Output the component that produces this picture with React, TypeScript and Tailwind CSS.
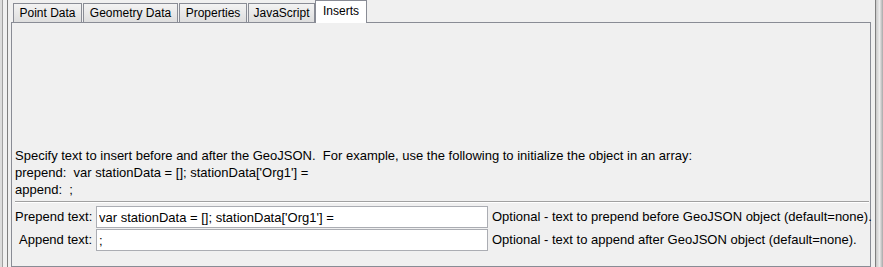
import React from "react";

const tabs = [
  { label: "Point Data", w: "w-[69px]", ml: "" },
  { label: "Geometry Data", w: "w-[95px]", ml: "ml-[1px]" },
  { label: "Properties", w: "w-[68px]", ml: "ml-[1px]" },
  { label: "JavaScript", w: "w-[67px]", ml: "ml-[1px]" },
];

export default function App() {
  return (
    <div className="w-[883px] h-[267px] overflow-hidden flex bg-[#f0f0f0] text-black font-[Liberation_Sans,Arial,sans-serif] text-[13px]">
      {/* left window edge */}
      <div className="w-[8px] h-full flex shrink-0">
        <div className="w-[2px] h-full bg-[#dcdcdc]" />
        <div className="w-[1px] h-full bg-[#a0a0a0]" />
        <div className="w-[4px] h-full bg-[#f0f0f0]" />
        <div className="w-[1px] h-full bg-[#7f7f7f]" />
      </div>

      {/* main area */}
      <div className="w-[867px] h-full flex flex-col pl-[3px] pr-[4px] shrink-0">
        {/* tab strip */}
        <div className="h-[22px] flex items-end pl-[2px] shrink-0 text-[12px]">
          {tabs.map((t) => (
            <div
              key={t.label}
              className={`${t.w} ${t.ml} h-[19px] border border-b-0 border-[#898c95] bg-gradient-to-b from-[#f3f3f3] to-[#dedede] text-center leading-[18px] whitespace-nowrap`}
            >
              {t.label}
            </div>
          ))}
          <div className="w-[52px] h-[23px] -mb-px relative z-10 border border-b-0 border-[#898c95] bg-white text-center leading-[18px] pt-[1px] whitespace-nowrap">
            Inserts
          </div>
        </div>

        {/* panel */}
        <div className="flex-1 border border-[#898c95] bg-[#f0f0f0] flex flex-col pl-[3px] pr-[1px] pt-[124px]">
          <div className="leading-[17px] whitespace-nowrap">
            <div>
              Specify text to insert before and after the GeoJSON.&nbsp; For example, use the following to initialize the object in an array:
            </div>
            <div>prepend:&nbsp; var stationData = []; stationData['Org1'] =</div>
            <div>append:&nbsp; ;</div>
          </div>

          <div className="mt-[3px] h-[2px] border-t border-[#a0a0a0] border-b border-b-white" />

          <div className="mt-[3px] grid grid-cols-[77px_392px_1fr] gap-x-[4px] gap-y-[1px] items-center">
            <div className="text-right whitespace-nowrap h-[22px] leading-[22px]">Prepend text:</div>
            <input
              readOnly
              value="var stationData = []; stationData['Org1'] ="
              className="h-[22px] w-[392px] border border-[#abadb3] bg-white px-[2px] text-[13px] leading-[20px] font-[Liberation_Sans,Arial,sans-serif] text-black outline-none"
            />
            <div className="whitespace-nowrap h-[22px] leading-[22px]">
              Optional - text to prepend before GeoJSON object (default=none).
            </div>

            <div className="text-right whitespace-nowrap h-[22px] leading-[22px]">Append text:</div>
            <input
              readOnly
              value=";"
              className="h-[22px] w-[392px] border border-[#abadb3] bg-white px-[2px] text-[13px] leading-[20px] font-[Liberation_Sans,Arial,sans-serif] text-black outline-none"
            />
            <div className="whitespace-nowrap h-[22px] leading-[22px]">
              Optional - text to append after GeoJSON object (default=none).
            </div>
          </div>
        </div>
      </div>

      {/* right window edge */}
      <div className="w-[8px] h-full flex shrink-0">
        <div className="w-[1px] h-full bg-[#7f7f7f]" />
        <div className="w-[7px] h-full bg-gradient-to-r from-[#c8c8c8] via-[#ececec] to-[#a8a8a8]" />
      </div>
    </div>
  );
}
